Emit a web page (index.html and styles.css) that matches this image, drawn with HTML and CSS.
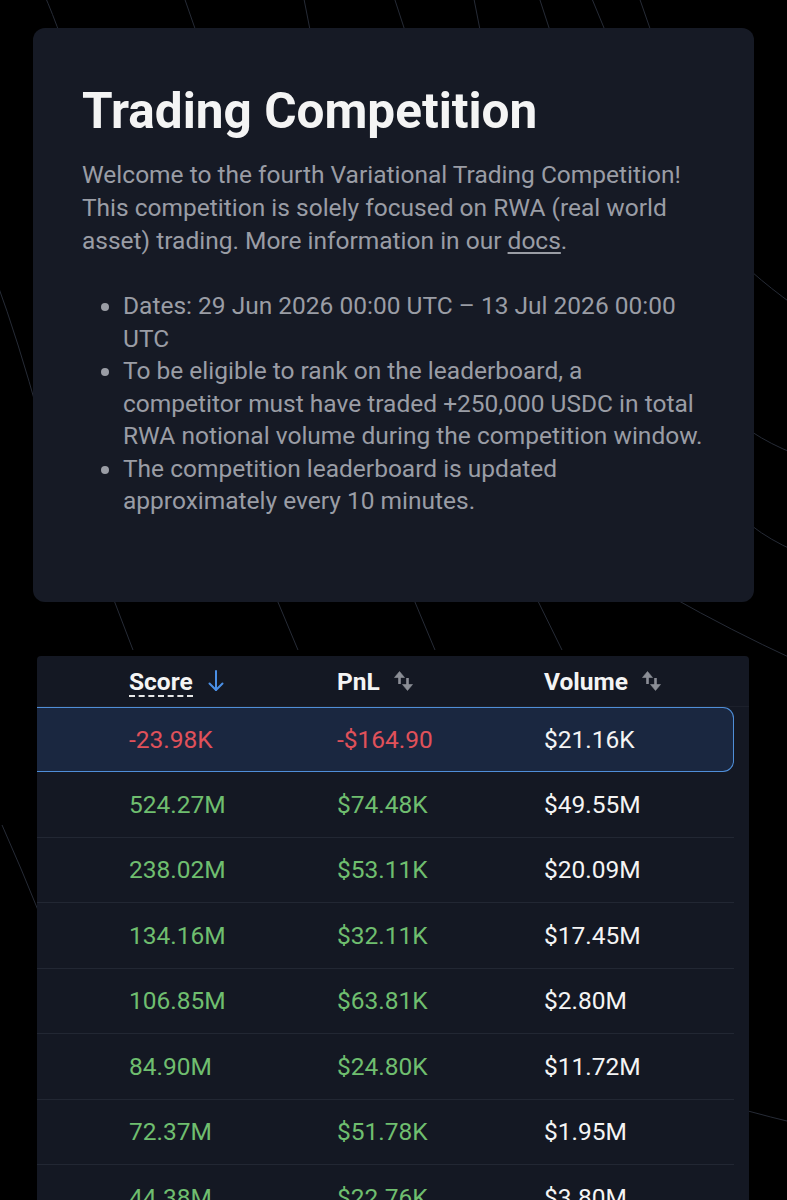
FILE: index.html
```html
<!DOCTYPE html>
<html>
<head>
<meta charset="UTF-8">
<title>Trading Competition</title>
<link rel="stylesheet" href="styles.css">
</head>
<body>

<svg class="backdrop" width="787" height="1200" viewBox="0 0 787 1200">
	<g fill="none" stroke="#262b36" stroke-width="1">
		<path d="M44 -6 Q52 12 62 40"/>
		<path d="M183 -6 L199 40"/>
		<path d="M303 -6 L312 40"/>
		<path d="M393 -6 L408 40"/>
		<path d="M473 -6 L482 40"/>
		<path d="M538 -6 L553 40"/>
		<path d="M590 -6 L609 40"/>
		<path d="M638 -6 L654 40"/>
		<path d="M112 595 L133 650"/>
		<path d="M275 595 L298 650"/>
		<path d="M412 595 L435 650"/>
		<path d="M535 595 L562 650"/>
		<path d="M670 596 Q730 630 795 660"/>
		<path d="M-4 280 Q18 340 40 420"/>
		<path d="M2 825 Q22 870 40 915"/>
		<path d="M752 272 Q770 288 795 306"/>
		<path d="M752 432 Q770 444 795 454"/>
		<path d="M752 526 Q770 540 795 551"/>
		<path d="M748 1111 Q770 1117 795 1123"/>
	</g>
</svg>

<div class="page">
	<section class="intro">
		<h1>Trading Competition</h1>
		<p>Welcome to the fourth Variational Trading Competition! This competition is solely focused on RWA (real world asset) trading. More information in our <a href="#">docs</a>.</p>
		<ul>
			<li>Dates: 29 Jun 2026 00:00 UTC – 13 Jul 2026 00:00 UTC</li>
			<li>To be eligible to rank on the leaderboard, a competitor must have traded +250,000 USDC in total RWA notional volume during the competition window.</li>
			<li>The competition leaderboard is updated approximately every 10 minutes.</li>
		</ul>
	</section>

	<section class="board">
		<div class="board-head">
			<span></span>
			<span class="col"><span class="hint">Score</span>
				<svg class="sort" width="18" height="26" viewBox="0 0 18 26"><g fill="none" stroke="#4a8fe6" stroke-width="2" stroke-linecap="round" stroke-linejoin="round"><path d="M9 3v19"/><path d="M2.5 15.5L9 22l6.5-6.5"/></g></svg>
			</span>
			<span class="col">PnL
				<svg class="sort" width="20" height="26" viewBox="0 0 20 26"><g fill="#8b8e96" stroke="#8b8e96"><path d="M5.5 5v11" stroke-width="2.6"/><path d="M0.5 9.5L5.5 3.5 10.5 9.5z" stroke-width="0.6" stroke-linejoin="round"/><path d="M13.5 10v11" stroke-width="2.6"/><path d="M8.5 16.5L13.5 22.5 18.5 16.5z" stroke-width="0.6" stroke-linejoin="round"/></g></svg>
			</span>
			<span class="col">Volume
				<svg class="sort" width="20" height="26" viewBox="0 0 20 26"><g fill="#8b8e96" stroke="#8b8e96"><path d="M5.5 5v11" stroke-width="2.6"/><path d="M0.5 9.5L5.5 3.5 10.5 9.5z" stroke-width="0.6" stroke-linejoin="round"/><path d="M13.5 10v11" stroke-width="2.6"/><path d="M8.5 16.5L13.5 22.5 18.5 16.5z" stroke-width="0.6" stroke-linejoin="round"/></g></svg>
			</span>
		</div>

		<div class="row mine">
			<span></span><span class="neg">-23.98K</span><span class="neg">-$164.90</span><span>$21.16K</span>
		</div>
		<div class="row">
			<span></span><span class="pos">524.27M</span><span class="pos">$74.48K</span><span>$49.55M</span>
		</div>
		<div class="row">
			<span></span><span class="pos">238.02M</span><span class="pos">$53.11K</span><span>$20.09M</span>
		</div>
		<div class="row">
			<span></span><span class="pos">134.16M</span><span class="pos">$32.11K</span><span>$17.45M</span>
		</div>
		<div class="row">
			<span></span><span class="pos">106.85M</span><span class="pos">$63.81K</span><span>$2.80M</span>
		</div>
		<div class="row">
			<span></span><span class="pos">84.90M</span><span class="pos">$24.80K</span><span>$11.72M</span>
		</div>
		<div class="row">
			<span></span><span class="pos">72.37M</span><span class="pos">$51.78K</span><span>$1.95M</span>
		</div>
		<div class="row">
			<span></span><span class="pos">44.38M</span><span class="pos">$22.76K</span><span>$3.80M</span>
		</div>
	</section>
</div>

</body>
</html>
```

FILE: styles.css
```css
html, body {
	margin: 0;
	background: #000;
}

body {
	position: relative;
	width: 787px;
	height: 1200px;
	overflow: hidden;
	font-family: Roboto, "Liberation Sans", sans-serif;
	color: #f2f2f2;
}

.backdrop {
	position: absolute;
	top: 0;
	left: 0;
	z-index: 0;
}

.page {
	position: relative;
	z-index: 1;
	padding-top: 28px;
}

/* intro card */
.intro {
	box-sizing: border-box;
	width: 721px;
	height: 574px;
	margin-left: 33px;
	padding: 55px 49px 0 49px;
	background: #161a25;
	border-radius: 12px;
}

.intro h1 {
	margin: 0;
	font-size: 49.5px;
	line-height: 56px;
	font-weight: 700;
	color: #f4f4f4;
}

.intro p {
	margin: 19px 0 0 0;
	font-size: 24.5px;
	line-height: 33px;
	color: #9a9da5;
}

.intro a {
	color: #9a9da5;
	text-decoration: underline;
	text-underline-offset: 3px;
}

.intro ul {
	margin: 33px 0 0 0;
	padding-left: 41px;
	font-size: 24.5px;
	line-height: 32.5px;
	color: #9a9da5;
}

/* leaderboard */
.board {
	width: 712px;
	height: 600px;
	margin: 54px 0 0 37px;
	background: #141823;
	border-radius: 4px 4px 0 0;
}

.board-head,
.row {
	display: grid;
	grid-template-columns: 92px 208px 207px 1fr;
	align-items: center;
	font-size: 24.5px;
}

.board-head {
	height: 50px;
	border-bottom: 1px solid #1c202b;
	font-weight: 700;
	color: #f4f4f4;
}

.board-head .col {
	display: flex;
	align-items: center;
	gap: 14px;
}

.hint {
	border-bottom: 2px dashed #e8e8e8;
	line-height: 25px;
	padding-bottom: 1px;
	margin-top: 3px;
}

.sort {
	display: block;
}

.row {
	box-sizing: border-box;
	width: 697px;
	height: 65.5px;
	border-bottom: 1px solid #222733;
	color: #f4f4f4;
}

.row.mine {
	height: 65px;
	background: #1a2740;
	border: 1px solid #4f8ed8;
	border-left: none;
	border-radius: 0 11px 11px 0;
}

.neg {
	color: #e0515a;
}

.pos {
	color: #6fbe6f;
}
```
